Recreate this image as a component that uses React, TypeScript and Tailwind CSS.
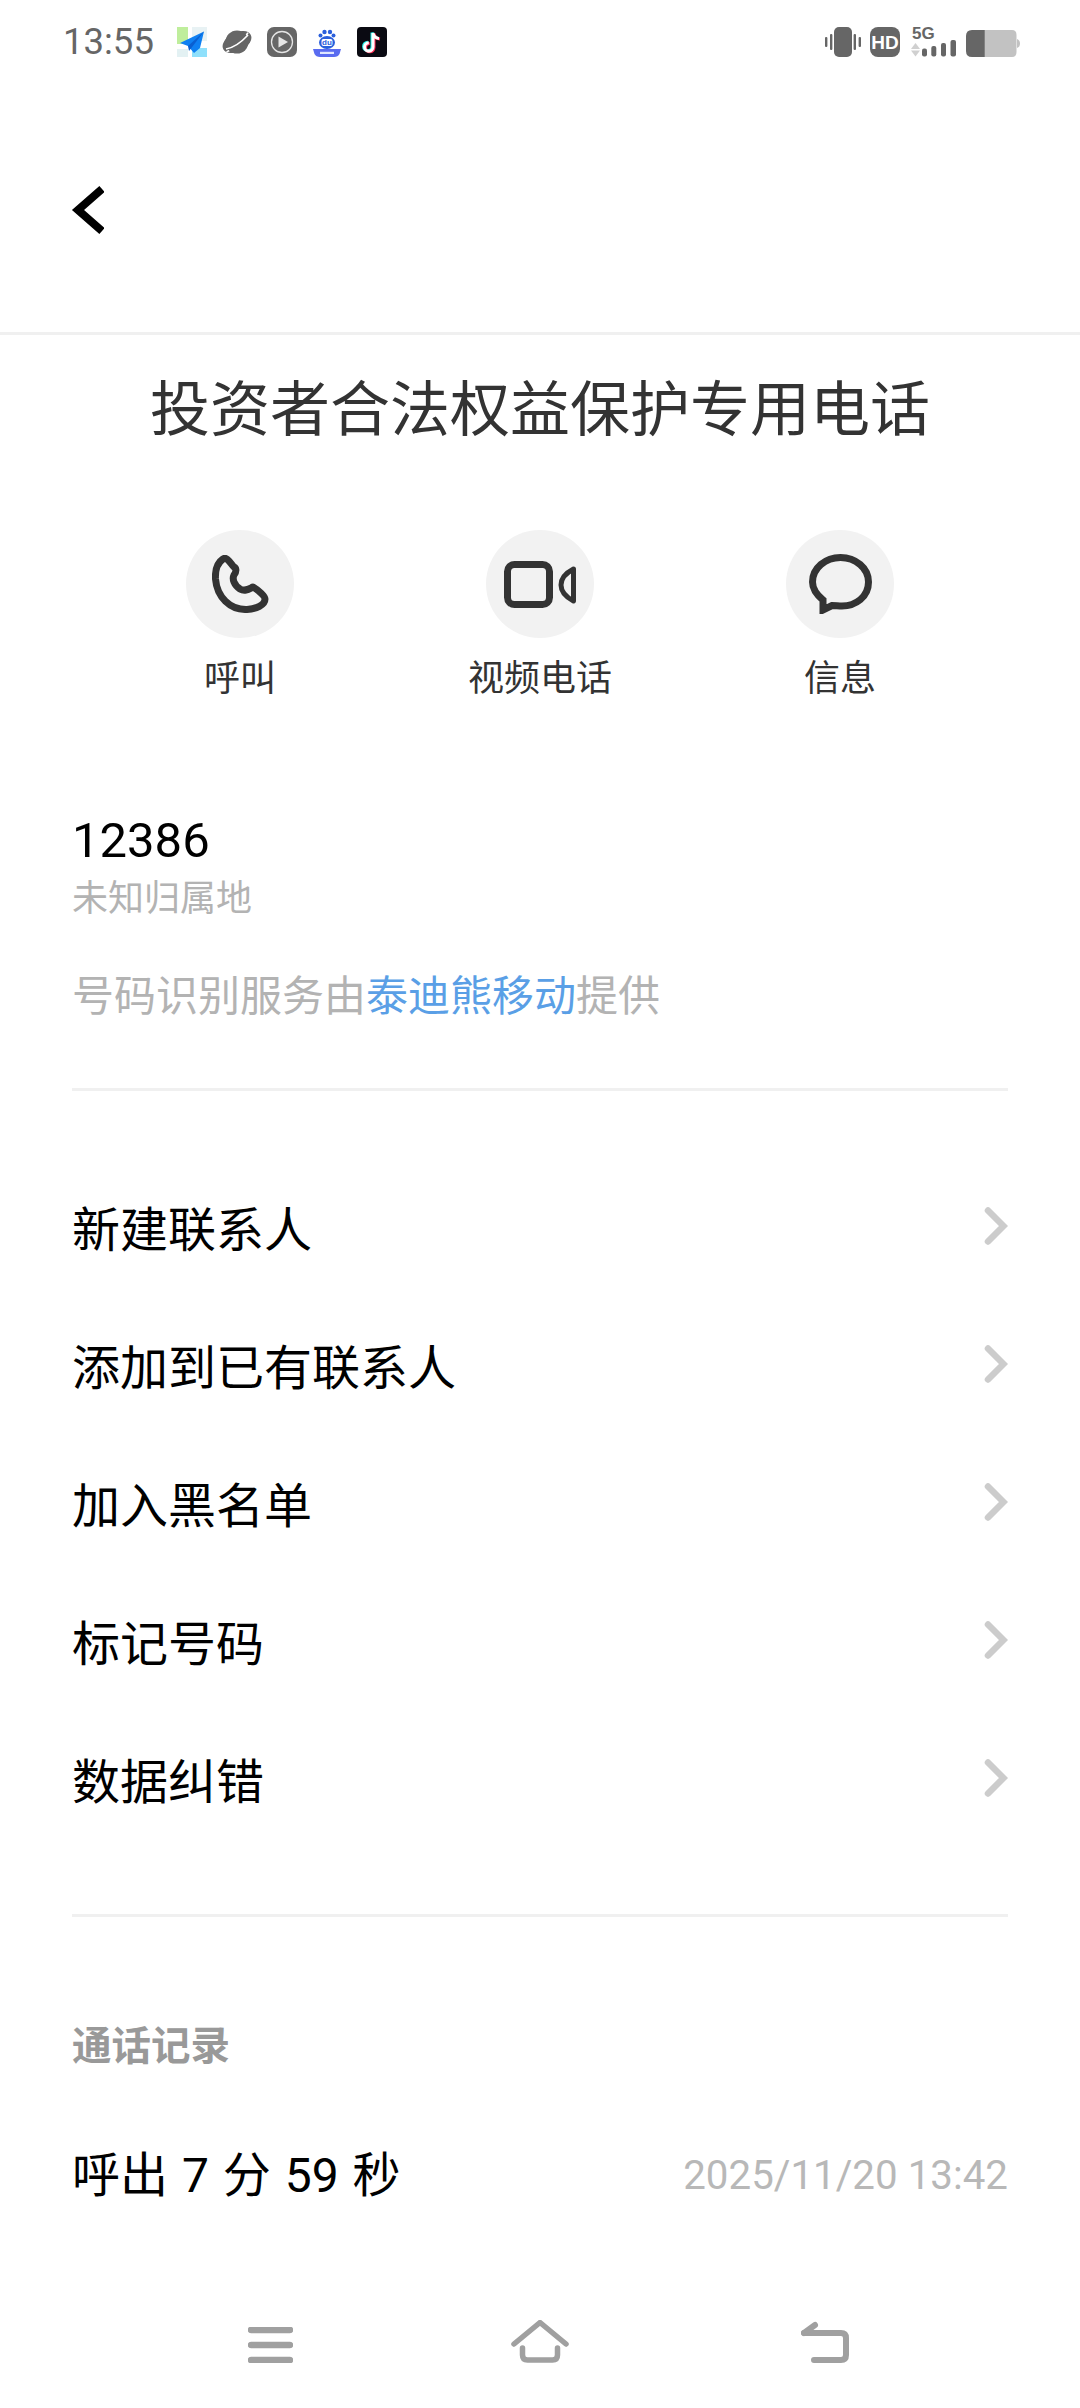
import React from "react";

function Chevron() {
  return (
    <svg width="24" height="38" viewBox="0 0 24 38" fill="none" className="shrink-0">
      <path d="M4 3.5 L19.5 19 L4 34.5" stroke="#cccccc" strokeWidth="6.5" strokeLinecap="round" />
    </svg>
  );
}

function PaperPlane() {
  return (
    <svg width="30" height="30" viewBox="0 0 30 30">
      <rect x="0" y="0" width="11" height="17" fill="#bfee9c" />
      <rect x="15" y="0" width="15" height="14" fill="#e8f2f4" />
      <rect x="0" y="22" width="11" height="8" fill="#e3f1f3" />
      <rect x="15" y="21" width="15" height="9" fill="#8fe0fb" />
      <path d="M27 4.5 L3 16 L11 19 L17 26 L23 21 Z" fill="#0f80f2" />
      <path d="M27 4.5 L11 19 L12 24 Z" fill="#0a5fd0" />
    </svg>
  );
}
function Planet() {
  return (
    <svg width="30" height="30" viewBox="0 0 30 30">
      <g transform="rotate(-28 15 15)">
        <ellipse cx="15" cy="15" rx="15.5" ry="9.5" fill="#666" />
        <path d="M1 19 Q15 20 29 12" fill="none" stroke="#fff" strokeWidth="1.6" />
      </g>
      <circle cx="15" cy="15" r="11.5" fill="#666" />
      <path d="M4 22 Q15 20 26 8" fill="none" stroke="#fff" strokeWidth="1.6" />
    </svg>
  );
}
function Play() {
  return (
    <svg width="30" height="30" viewBox="0 0 30 30">
      <rect width="30" height="30" rx="7" fill="#666" />
      <circle cx="15" cy="15" r="10.5" fill="none" stroke="#e5e5e5" strokeWidth="1.3" />
      <path d="M11.5 9.5 L21 15 L11.5 20.5 Z" fill="#e5e5e5" />
    </svg>
  );
}
function Paw() {
  return (
    <svg width="30" height="30" viewBox="0 0 30 30">
      <circle cx="8.5" cy="8.5" r="2" fill="#2a5fdc" />
      <circle cx="12.5" cy="5" r="2.2" fill="#2a5fdc" />
      <circle cx="18" cy="5" r="2.2" fill="#2a5fdc" />
      <circle cx="21.5" cy="8.5" r="2" fill="#2a5fdc" />
      <ellipse cx="15" cy="15.5" rx="8" ry="6.5" fill="#2a5fdc" />
      <rect x="9.5" y="12" width="11" height="7" rx="2" fill="#fff" />
      <text x="15" y="18.4" textAnchor="middle" fontSize="8" fontWeight="700" fill="#2a5fdc" fontFamily="Liberation Sans, sans-serif">du</text>
      <path d="M1 22 H29 L27.5 27 Q26 30 22 30 H8 Q4 30 2.5 27 Z" fill="#5a6cf0" />
      <rect x="8" y="24.8" width="14" height="2.2" fill="#dfe6ff" />
    </svg>
  );
}
function TikTok() {
  const d = "M16 6 V20 A4.2 4.2 0 1 1 11.8 15.8 M16 6 Q17 11 22 11.5";
  return (
    <svg width="30" height="30" viewBox="0 0 30 30">
      <rect width="30" height="30" rx="4" fill="#0a0a12" />
      <path d={d} fill="none" stroke="#25f4ee" strokeWidth="3" transform="translate(-1 -0.6)" />
      <path d={d} fill="none" stroke="#fe2c55" strokeWidth="3" transform="translate(1 0.6)" />
      <path d={d} fill="none" stroke="#fff" strokeWidth="3" />
    </svg>
  );
}

function Vibrate() {
  return (
    <svg width="36" height="30" viewBox="0 0 36 30">
      <rect x="9" y="0" width="18" height="30" rx="5" fill="#666" />
      <rect x="0" y="10" width="2.4" height="10" rx="1" fill="#666" />
      <rect x="5" y="7" width="2.4" height="16" rx="1" fill="#666" />
      <rect x="28.6" y="7" width="2.4" height="16" rx="1" fill="#666" />
      <rect x="33.6" y="10" width="2.4" height="10" rx="1" fill="#666" />
    </svg>
  );
}
function HD() {
  return (
    <div className="flex h-[30px] w-[30px] items-center justify-center rounded-[8px] bg-[#666666]">
      <span className="text-[19px] leading-none font-bold text-white [font-family:'Liberation_Sans',sans-serif]">HD</span>
    </div>
  );
}
function Signal() {
  return (
    <div className="relative h-[29px] w-[45px]">
      <span className="absolute top-[-2px] left-[1px] text-[17px] leading-[16px] font-bold text-[#666666] [font-family:'Liberation_Sans',sans-serif]">5G</span>
      <svg width="45" height="29" viewBox="0 0 45 29" className="absolute top-0 left-0">
        <path d="M0 21 L4.5 15 L9 21 Z" fill="#d0d0d0" />
        <path d="M0 22.5 L4.5 28.5 L9 22.5 Z" fill="#d0d0d0" />
        <rect x="11" y="20.5" width="5" height="8" rx="2" fill="#666" />
        <rect x="20.3" y="18" width="5" height="10.5" rx="2" fill="#666" />
        <rect x="30" y="15" width="5" height="13.5" rx="2" fill="#666" />
        <rect x="39.5" y="12" width="5.5" height="16.5" rx="2" fill="#666" />
      </svg>
    </div>
  );
}
function Battery() {
  return (
    <svg width="54" height="27" viewBox="0 0 54 27">
      <path d="M18 0 H46 Q50.5 0 50.5 5 V22 Q50.5 27 46 27 H18 Z" fill="#c2c2c2" />
      <path d="M51 9 Q54 10 54 13.5 Q54 17 51 18 Z" fill="#c2c2c2" />
      <path d="M6 0 H18.7 V27 H6 Q0 27 0 21 V6 Q0 0 6 0 Z" fill="#666" />
    </svg>
  );
}

function StatusBar() {
  return (
    <div className="flex h-[84px] items-center justify-between pr-[60px] pl-[63px]">
      <div className="flex items-center">
        <span className="w-[114px] text-[36.5px] leading-none text-[#666666] [font-family:Roboto,sans-serif]">13:55</span>
        <div className="flex items-center gap-[15px]">
          <PaperPlane />
          <Planet />
          <Play />
          <Paw />
          <TikTok />
        </div>
      </div>
      <div className="flex items-center">
        <Vibrate />
        <div className="ml-[9px]"><HD /></div>
        <div className="ml-[11px]"><Signal /></div>
        <div className="mt-[2px] ml-[10px]"><Battery /></div>
      </div>
    </div>
  );
}

function Action({ label, children }: { label: string; children: React.ReactNode }) {
  return (
    <div className="flex w-[300px] flex-col items-center">
      <div className="flex h-[108px] w-[108px] items-center justify-center rounded-full bg-[#f2f2f2]">{children}</div>
      <span className="mt-[12px] text-[36px] leading-[50px] text-[#333333]">{label}</span>
    </div>
  );
}

function Row({ label }: { label: string }) {
  return (
    <div className="flex h-[138px] items-center justify-between">
      <span className="text-[48px] leading-none text-black">{label}</span>
      <Chevron />
    </div>
  );
}

export default function App() {
  return (
    <div className="flex h-[2408px] w-[1080px] flex-col overflow-hidden bg-white [font-family:'Noto_Sans_CJK_SC','Noto_Sans',sans-serif]">
      <StatusBar />
      <div className="flex h-[251px] items-center border-b-[3px] border-[#f0f0f0] pt-[4px] pl-[70px]">
        <svg width="34" height="50" viewBox="0 0 34 50" fill="none">
          <path d="M32 4 L8 25 L32 46" stroke="#000" strokeWidth="8" />
        </svg>
      </div>

      <h1 className="mt-[30px] text-center text-[60px] leading-[80px] font-normal text-[#333333]">投资者合法权益保护专用电话</h1>

      <div className="mt-[85px] flex justify-center">
        <Action label="呼叫">
          <svg width="57" height="58" viewBox="0 0 57 58" fill="none">
            <path d="M11 4 C5 8 3 15 3.5 24 C5 42 18 55 35 54.5 C44 54 53 50 53 44 C53 41 46 35 41 32 C37 34 33 37 28 34 C22 30 20 24 22 20 C25 16 24 13 22 12 C19 9 15 1 11 4 Z" stroke="#333" strokeWidth="7" strokeLinejoin="round" />
          </svg>
        </Action>
        <Action label="视频电话">
          <svg width="72" height="47" viewBox="0 0 72 47" fill="none">
            <rect x="3.5" y="3.5" width="42" height="40" rx="7" stroke="#333" strokeWidth="7" />
            <path d="M69.5 8 C60 13 57 19 57 24 C57 30 60 35 69.5 40 Z" stroke="#333" strokeWidth="5" strokeLinejoin="round" />
          </svg>
        </Action>
        <Action label="信息">
          <svg width="63" height="60" viewBox="0 0 63 60" fill="none">
            <path d="M31.5 3.5 C46.5 3.5 59.5 14 59.5 28 C59.5 43 46.5 52 33 52 C29.5 52 26.5 51.5 23 51.5 L14 56 L14 46 C8 41 3.5 35 3.5 28 C3.5 14 16.5 3.5 31.5 3.5 Z" stroke="#333" strokeWidth="7" strokeLinejoin="miter" />
          </svg>
        </Action>
      </div>

      <div className="mt-[112px] px-[72px]">
        <div className="text-[49px] leading-[58px] text-black [font-family:Roboto,sans-serif]">12386</div>
        <div className="text-[36px] leading-[50px] text-[#b3b3b3]">未知归属地</div>
        <div className="mt-[43px] text-[42px] leading-[60px] text-[#b3b3b3]">
          号码识别服务由<span className="text-[#5a9fe6]">泰迪熊移动</span>提供
        </div>
        <div className="mt-[65px] h-[3px] bg-[#f0f0f0]" />
        <div className="mt-[66px]">
          <Row label="新建联系人" />
          <Row label="添加到已有联系人" />
          <Row label="加入黑名单" />
          <Row label="标记号码" />
          <Row label="数据纠错" />
        </div>
        <div className="mt-[67px] h-[3px] bg-[#f0f0f0]" />
        <div className="mt-[101px] text-[39.5px] leading-[50px] font-bold text-[#999999]">通话记录</div>
        <div className="mt-[81px] flex h-[50px] items-center justify-between">
          <span className="mt-[4px] text-[48px] leading-none text-black [font-family:Roboto,'Noto_Sans_CJK_SC',sans-serif] [word-spacing:2px]">呼出 7 分 59 秒</span>
          <span className="mt-[4px] text-[40.3px] leading-none text-[#b8b8b8] [font-family:Roboto,sans-serif]">2025/11/20 13:42</span>
        </div>
      </div>

      <div className="mt-auto mb-[45px] flex items-end pl-[248px]">
        <svg width="45" height="36" viewBox="0 0 45 36" fill="none">
          <path d="M3 3 H42 M3 18 H42 M3 33 H42" stroke="#a0a0a0" strokeWidth="6.5" strokeLinecap="round" />
        </svg>
        <svg className="ml-[218px]" width="58" height="43" viewBox="0 0 58 43" fill="none">
          <path d="M3 24 L29 2.5 L55 24" stroke="#a0a0a0" strokeWidth="5.5" strokeLinecap="round" strokeLinejoin="round" />
          <path d="M11.5 28 V35 Q11.5 40 16.5 40 H41.5 Q46.5 40 46.5 35 V28" stroke="#a0a0a0" strokeWidth="5.5" strokeLinecap="round" />
        </svg>
        <svg className="ml-[232px]" width="48" height="42" viewBox="0 0 48 42" fill="none">
          <path d="M3 12 H40 Q45 12 45 17 V34 Q45 39 40 39 H13" stroke="#a0a0a0" strokeWidth="6" strokeLinecap="round" />
          <path d="M3 12 L14 4" stroke="#a0a0a0" strokeWidth="6" strokeLinecap="round" />
        </svg>
      </div>
    </div>
  );
}
